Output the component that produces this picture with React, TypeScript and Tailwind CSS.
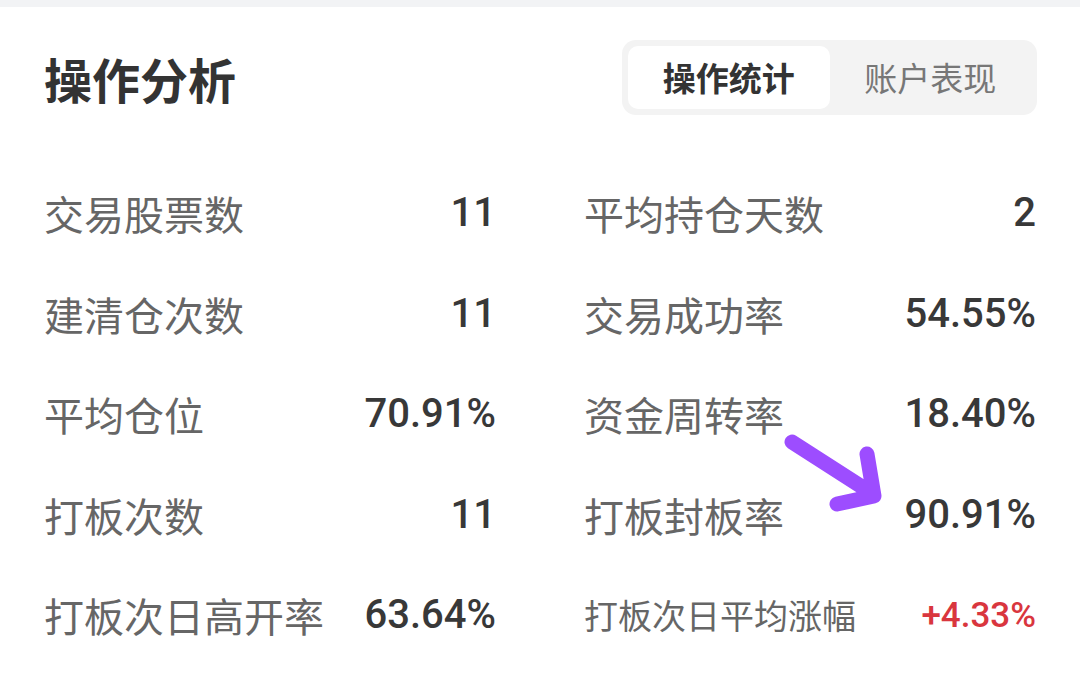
import React from 'react';

const rows: { left: [string, string]; right: [string, string, 'small'?] }[] = [
  { left: ['交易股票数', '11'], right: ['平均持仓天数', '2'] },
  { left: ['建清仓次数', '11'], right: ['交易成功率', '54.55%'] },
  { left: ['平均仓位', '70.91%'], right: ['资金周转率', '18.40%'] },
  { left: ['打板次数', '11'], right: ['打板封板率', '90.91%'] },
  { left: ['打板次日高开率', '63.64%'], right: ['打板次日平均涨幅', '+4.33%', 'small'] },
];

const cjk = { fontFamily: '"Noto Sans CJK SC", "Noto Sans", sans-serif' };
const num = { fontFamily: 'Roboto, "Noto Sans", sans-serif' };

function Stat({ label, value, small }: { label: string; value: string; small?: boolean }) {
  return (
    <div className="flex h-[100.5px] items-center justify-between">
      <span
        style={cjk}
        className={small ? 'text-[34px] leading-none text-[#666666]' : 'text-[40px] leading-none text-[#666666]'}
      >
        {label}
      </span>
      <span
        style={num}
        className={
          small
            ? 'text-[35px] leading-none font-medium text-[#d9363e]'
            : 'text-[40px] leading-none font-medium text-[#383838]'
        }
      >
        {value}
      </span>
    </div>
  );
}

export default function App() {
  return (
    <div className="relative h-[678px] w-[1080px] overflow-hidden bg-white">
      <div className="h-[7px] bg-[#f2f3f5]" />

      <div className="px-[44px]">
        {/* Header */}
        <div className="mt-[33px] flex h-[75px] items-center justify-between">
          <h1 style={cjk} className="text-[48px] font-bold leading-none text-[#333333]">
            操作分析
          </h1>
          <div className="mr-[-1px] flex h-[75px] w-[415px] rounded-[14px] bg-[#f3f3f3] p-[6px]">
            <div
              style={cjk}
              className="flex flex-1 items-center justify-center rounded-[10px] bg-white text-[33px] font-bold text-[#333333]"
            >
              操作统计
            </div>
            <div style={cjk} className="flex flex-1 items-center justify-center text-[33px] text-[#777777]">
              账户表现
            </div>
          </div>
        </div>

        {/* Stats */}
        <div className="mt-[48px] grid grid-cols-2 gap-x-[88px]">
          {rows.map((r) => (
            <React.Fragment key={r.left[0]}>
              <Stat label={r.left[0]} value={r.left[1]} />
              <Stat label={r.right[0]} value={r.right[1]} small={r.right[2] === 'small'} />
            </React.Fragment>
          ))}
        </div>
      </div>

      {/* Annotation arrow */}
      <svg className="absolute left-[770px] top-[420px]" width="130" height="110" viewBox="0 0 130 110" fill="none">
        <path
          d="M22 22 L103 74 M97 34 L104 76 L67 84"
          stroke="#9d4dff"
          strokeWidth="15"
          strokeLinecap="round"
          strokeLinejoin="round"
        />
      </svg>
    </div>
  );
}
